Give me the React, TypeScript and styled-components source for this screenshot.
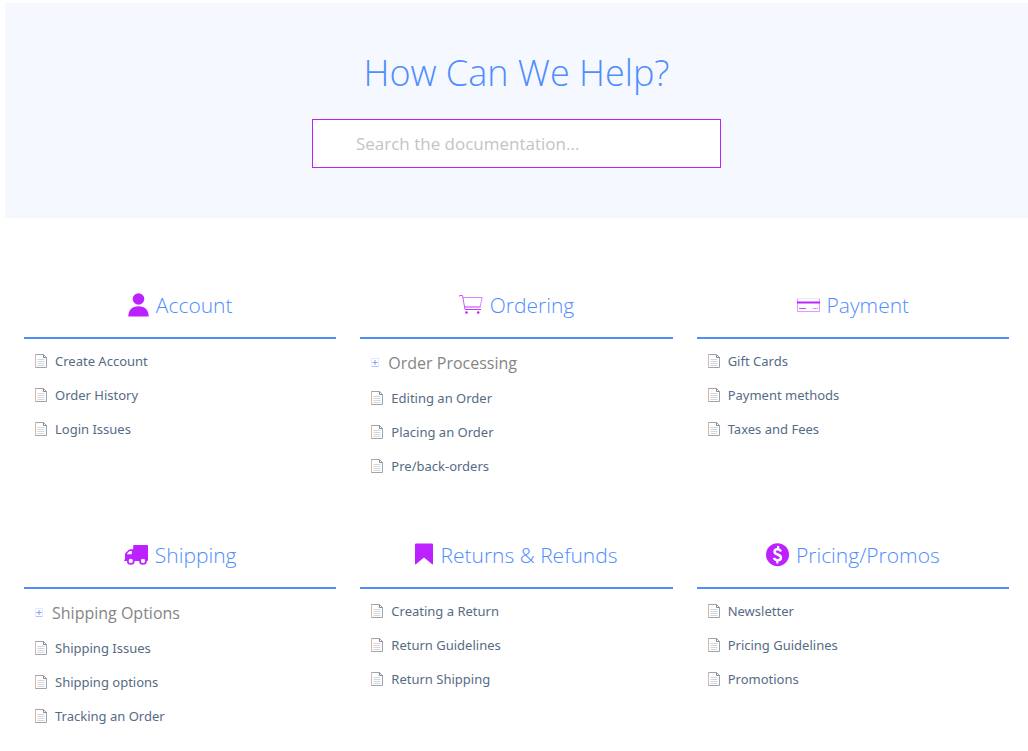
import React from "react";
import styled, { createGlobalStyle } from "styled-components";

const GlobalStyle = createGlobalStyle`
  *, *::before, *::after { box-sizing: border-box; }
  body {
    margin: 0;
    background: #ffffff;
    font-family: "Segoe UI", "Open Sans", "Noto Sans", sans-serif;
  }
`;

const Page = styled.div`
  padding-top: 3px;
`;

const Hero = styled.header`
  display: flex;
  flex-direction: column;
  align-items: center;
  margin-left: 5px;
  padding: 46px 0 50px;
  background: #f5f8ff;
`;

const HeroTitle = styled.h1`
  margin: 0 0 22px;
  font-size: 36px;
  line-height: 48px;
  font-weight: 340;
  color: #4f8dfd;
`;

const SearchForm = styled.form`
  width: 40%;
`;

const SearchInput = styled.input`
  display: block;
  width: 100%;
  height: 49px;
  padding: 0 43px;
  border: 1px solid #bb22f5;
  border-radius: 0;
  outline: none;
  background: #ffffff;
  font-family: inherit;
  font-size: 17px;
  color: #555555;

  &::placeholder {
    color: #c4c4c4;
    opacity: 1;
  }
`;

const Grid = styled.main`
  display: grid;
  grid-template-columns: repeat(3, 1fr);
  gap: 40px 24px;
  padding: 55px 19px 20px 24px;
`;

const SectionTitle = styled.h2`
  display: flex;
  align-items: center;
  justify-content: center;
  gap: 7px;
  height: 66px;
  margin: 0;
  border-bottom: 2px solid #4f8dfd;
  font-size: 21px;
  line-height: 28px;
  font-weight: 320;
  color: #4f8dfd;

  svg { flex: none; }
`;

const List = styled.ul`
  margin: 0;
  padding: 5px 0 0 11px;
  list-style: none;
`;

const ArticleLink = styled.a`
  display: flex;
  align-items: center;
  gap: 8px;
  height: 34px;
  font-family: "Segoe UI", "Noto Sans", "Open Sans", sans-serif;
  font-size: 13px;
  line-height: 18px;
  color: #566b85;
  text-decoration: none;
`;

const FolderButton = styled.button`
  display: flex;
  align-items: center;
  gap: 9px;
  height: 37px;
  padding: 0;
  border: 0;
  background: none;
  font-family: inherit;
  font-size: 16px;
  line-height: 22px;
  color: #858585;
  cursor: pointer;
`;

const PURPLE = "#bb22ff";

const UserIcon = () => (
  <svg width="21" height="24" viewBox="0 0 21 24" fill={PURPLE} aria-hidden="true">
    <circle cx="10.5" cy="6" r="5.8" />
    <path d="M0.3 23.5C0.3 17 4 13.2 10.5 13.2S20.7 17 20.7 23.5Z" />
  </svg>
);

const CartIcon = () => (
  <svg width="24" height="22" viewBox="0 0 24 22" fill="none" stroke={PURPLE} aria-hidden="true">
    <path d="M0.5 2.5V1.5H3.5L6 15.5" strokeWidth="1" opacity="0.75" />
    <path d="M4 3.5H23.2L21.2 12.8" strokeWidth="1" opacity="0.55" />
    <path d="M5.5 13H21.5" strokeWidth="1" opacity="0.9" />
    <path d="M6 15.5H22" strokeWidth="1" opacity="0.9" />
    <circle cx="7.5" cy="18.5" r="1.3" fill={PURPLE} stroke="none" />
    <circle cx="19.2" cy="18.5" r="1.3" fill={PURPLE} stroke="none" />
  </svg>
);

const CardIcon = () => (
  <svg width="23" height="16" viewBox="0 0 23 16" fill="none" aria-hidden="true">
    <path d="M0.5 2V14.5H22.5V2" stroke={PURPLE} opacity="0.45" />
    <path d="M0.5 2.5V1.5H22.5V2.5" stroke={PURPLE} opacity="0.12" />
    <path d="M0 5.5H23" stroke={PURPLE} strokeWidth="2" />
    <path d="M2 11.5H9" stroke={PURPLE} opacity="0.8" />
    <path d="M16 11.5H21" stroke={PURPLE} strokeDasharray="1.4 0.4" opacity="0.6" />
  </svg>
);

const TruckIcon = () => (
  <svg width="24" height="22" viewBox="0 0 24 22" aria-hidden="true">
    <path
      fill={PURPLE}
      fillRule="evenodd"
      d="M9.2 2Q9.2 1 10.2 1H23Q24 1 24 2V16Q24 17 23 17H1Q0 17 0 16.2Q0 15.5 1 15.5V10.5Q1 9.6 1.8 8.8L4.6 6Q5.4 5.2 6.4 5.2H9.2ZM3 10.3H7.8V6.9H6.3Q5.8 6.9 5.4 7.3L3.2 9.6Q3 9.8 3 10.3Z"
    />
    <circle cx="6.8" cy="17" r="3" fill="#fff" stroke={PURPLE} strokeWidth="1.7" />
    <circle cx="19" cy="17" r="3" fill="#fff" stroke={PURPLE} strokeWidth="1.7" />
  </svg>
);

const BookmarkIcon = () => (
  <svg width="18" height="24" viewBox="0 0 18 24" fill={PURPLE} aria-hidden="true">
    <path d="M1.2 0.6H16.8Q18 0.6 18 1.8V20.4Q18 22 16.8 21L9 14.6L1.2 21Q0 22 0 20.4V1.8Q0 0.6 1.2 0.6Z" />
  </svg>
);

const DollarIcon = () => (
  <svg width="23" height="24" viewBox="0 0 23 24" fill="none" aria-hidden="true">
    <circle cx="11.5" cy="11.7" r="11.5" fill={PURPLE} />
    <path
      d="M15 8.4C14.3 6.9 13.2 6.3 11.7 6.3C9.8 6.3 8.5 7.2 8.5 8.8C8.5 12.3 15 10.7 15 14.6C15 16.3 13.6 17.3 11.6 17.3C9.8 17.3 8.5 16.4 7.9 14.9"
      stroke="#fff"
      strokeWidth="2.4"
    />
    <path d="M12.1 3V6.5M11.3 17V20.6" stroke="#fff" strokeWidth="2.2" />
  </svg>
);

const DocIcon = () => (
  <svg width="12" height="14" viewBox="0 0 12 14" fill="none" aria-hidden="true">
    <path d="M0.5 0.5H8.5L11.5 3.5V13.5H0.5Z" stroke="#9da3b3" />
    <path d="M0.5 1V13" stroke="#e3b2a0" />
    <path d="M8.5 0.5V3.5H11.5" stroke="#8d8494" />
    <path d="M2.5 5.5H9.5M2.5 7.5H9.5M2.5 9.5H9.5M2.5 11.5H9.5" stroke="#d3d5dc" />
  </svg>
);

const PlusBoxIcon = () => (
  <svg width="8" height="9" viewBox="0 0 8 9" fill="none" aria-hidden="true">
    <rect x="0.5" y="0.5" width="7" height="8" stroke="#e6eafd" />
    <path d="M4 2V7M1.5 4.5H6.5" stroke="#8c9cf4" />
    <path d="M1 8.5H7" stroke="#b4c0fa" />
  </svg>
);

interface Category {
  title: string;
  icon: React.ReactNode;
  folder?: string;
  articles: string[];
}

const categories: Category[] = [
  { title: "Account", icon: <UserIcon />, articles: ["Create Account", "Order History", "Login Issues"] },
  {
    title: "Ordering",
    icon: <CartIcon />,
    folder: "Order Processing",
    articles: ["Editing an Order", "Placing an Order", "Pre/back-orders"],
  },
  { title: "Payment", icon: <CardIcon />, articles: ["Gift Cards", "Payment methods", "Taxes and Fees"] },
  {
    title: "Shipping",
    icon: <TruckIcon />,
    folder: "Shipping Options",
    articles: ["Shipping Issues", "Shipping options", "Tracking an Order"],
  },
  {
    title: "Returns & Refunds",
    icon: <BookmarkIcon />,
    articles: ["Creating a Return", "Return Guidelines", "Return Shipping"],
  },
  { title: "Pricing/Promos", icon: <DollarIcon />, articles: ["Newsletter", "Pricing Guidelines", "Promotions"] },
];

export default function App() {
  return (
    <Page>
      <GlobalStyle />
      <Hero>
        <HeroTitle>How Can We Help?</HeroTitle>
        <SearchForm role="search" onSubmit={(e) => e.preventDefault()}>
          <SearchInput type="text" aria-label="Search the documentation" placeholder="Search the documentation..." />
        </SearchForm>
      </Hero>
      <Grid>
        {categories.map((category) => (
          <section key={category.title}>
            <SectionTitle>
              {category.icon}
              {category.title}
            </SectionTitle>
            <List>
              {category.folder && (
                <li>
                  <FolderButton type="button" aria-expanded={false}>
                    <PlusBoxIcon />
                    {category.folder}
                  </FolderButton>
                </li>
              )}
              {category.articles.map((article) => (
                <li key={article}>
                  <ArticleLink href="#">
                    <DocIcon />
                    {article}
                  </ArticleLink>
                </li>
              ))}
            </List>
          </section>
        ))}
      </Grid>
    </Page>
  );
}
